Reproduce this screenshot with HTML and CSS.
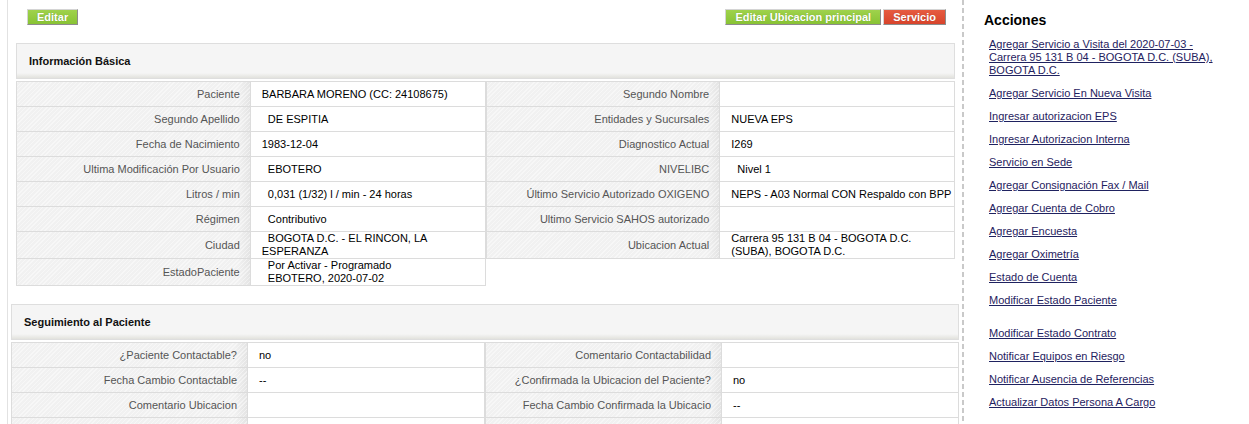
FILE: index.html
```html
<html lang="es">

<head>
	<title>Paciente - Información Básica</title>
	<meta http-equiv="Content-Type" content="text/html; charset=UTF-8">
	<meta name="viewport" content="width=device-width,initial-scale=1">
	<link rel="stylesheet" href="styles.css">
</head>

<body>
	<div class="page">
		<div class="main">
			<div class="toolbar">
				<a class="btn btn-green" href="#">Editar</a>
				<div class="toolbar-right">
					<a class="btn btn-green" href="#">Editar Ubicacion principal</a>
					<a class="btn btn-red" href="#">Servicio</a>
				</div>
			</div>

			<div class="panel panel-basic">
				<div class="panel-head">Información Básica</div>
				<div class="panel-body">
					<table class="info">
						<tr><td class="label">Paciente</td><td>BARBARA MORENO (CC: 24108675)</td></tr>
						<tr><td class="label">Segundo Apellido</td><td>&nbsp; DE ESPITIA</td></tr>
						<tr><td class="label">Fecha de Nacimiento</td><td>1983-12-04</td></tr>
						<tr><td class="label">Ultima Modificación Por Usuario</td><td>&nbsp; EBOTERO</td></tr>
						<tr><td class="label">Litros / min</td><td>&nbsp; 0,031 (1/32) l / min - 24 horas</td></tr>
						<tr><td class="label">Régimen</td><td>&nbsp; Contributivo</td></tr>
						<tr><td class="label">Ciudad</td><td>&nbsp; BOGOTA D.C. - EL RINCON, LA ESPERANZA</td></tr>
						<tr><td class="label">EstadoPaciente</td><td>&nbsp; Por Activar - Programado<br>&nbsp; EBOTERO, 2020-07-02</td></tr>
					</table>
					<table class="info">
						<tr><td class="label">Segundo Nombre</td><td></td></tr>
						<tr><td class="label">Entidades y Sucursales</td><td>NUEVA EPS</td></tr>
						<tr><td class="label">Diagnostico Actual</td><td>I269</td></tr>
						<tr><td class="label">NIVELIBC</td><td>&nbsp; Nivel 1</td></tr>
						<tr><td class="label">Último Servicio Autorizado OXIGENO</td><td>NEPS - A03 Normal CON Respaldo con BPP</td></tr>
						<tr><td class="label">Ultimo Servicio SAHOS autorizado</td><td></td></tr>
						<tr><td class="label">Ubicacion Actual</td><td>Carrera 95 131 B 04 - BOGOTA D.C. (SUBA), BOGOTA D.C.</td></tr>
					</table>
				</div>
			</div>

			<div class="panel panel-follow">
				<div class="panel-head">Seguimiento al Paciente</div>
				<div class="panel-body">
					<table class="info">
						<tr><td class="label">¿Paciente Contactable?</td><td>no</td></tr>
						<tr><td class="label">Fecha Cambio Contactable</td><td>--</td></tr>
						<tr><td class="label">Comentario Ubicacion</td><td></td></tr>
						<tr><td class="label"></td><td></td></tr>
					</table>
					<table class="info">
						<tr><td class="label">Comentario Contactabilidad</td><td></td></tr>
						<tr><td class="label">¿Confirmada la Ubicacion del Paciente?</td><td>no</td></tr>
						<tr><td class="label">Fecha Cambio Confirmada la Ubicacio</td><td>--</td></tr>
						<tr><td class="label"></td><td></td></tr>
					</table>
				</div>
			</div>
		</div>

		<div class="sidebar">
			<h2 class="sidebar-title">Acciones</h2>
			<div class="actions">
				<a href="#">Agregar Servicio a Visita del 2020-07-03 - Carrera 95 131 B 04 - BOGOTA D.C. (SUBA), BOGOTA D.C.</a>
				<a href="#">Agregar Servicio En Nueva Visita</a>
				<a href="#">Ingresar autorizacion EPS</a>
				<a href="#">Ingresar Autorizacion Interna</a>
				<a href="#">Servicio en Sede</a>
				<a href="#">Agregar Consignación Fax / Mail</a>
				<a href="#">Agregar Cuenta de Cobro</a>
				<a href="#">Agregar Encuesta</a>
				<a href="#">Agregar Oximetría</a>
				<a href="#">Estado de Cuenta</a>
				<a href="#">Modificar Estado Paciente</a>
				<a class="group-start" href="#">Modificar Estado Contrato</a>
				<a href="#">Notificar Equipos en Riesgo</a>
				<a href="#">Notificar Ausencia de Referencias</a>
				<a href="#">Actualizar Datos Persona A Cargo</a>
			</div>
		</div>
	</div>
</body>

</html>
```

FILE: styles.css
```css
body {
	margin: 0;
	font-family: "Liberation Sans", Arial, sans-serif;
	font-size: 11px;
	color: #000;
	background: #fff;
	overflow: hidden;
}

.page {
	display: flex;
	align-items: stretch;
	min-height: 424px;
}

.main {
	margin-left: 7px;
	width: 955px;
	flex-shrink: 0;
	box-sizing: border-box;
	border-left: 1px solid #e2e2e2;
}

.toolbar {
	display: flex;
	justify-content: space-between;
	padding: 9px 16px 0 19px;
}

.toolbar-right {
	display: flex;
	gap: 2px;
}

.btn {
	display: block;
	height: 14px;
	line-height: 14px;
	padding: 0 9px;
	font-size: 11px;
	font-weight: bold;
	color: #fff;
	text-decoration: none;
	border: 1px solid;
	border-color: #d4d4d4 #8c8c8c #8c8c8c #d4d4d4;
	text-shadow: 0 0 1px rgba(0, 0, 0, 0.25);
}

.btn-green {
	background: linear-gradient(#9fd24c, #88c334);
}

.btn-red {
	background: linear-gradient(#e65b40, #d8442b);
}

.panel {
	margin-top: 18px;
}

.panel-basic {
	margin-left: 8px;
	margin-right: 7px;
}

.panel-follow {
	margin-left: 3px;
	margin-right: 3px;
}

.panel-head {
	height: 34px;
	line-height: 34px;
	padding: 0 12px;
	font-size: 11px;
	font-weight: bold;
	color: #111;
	border: 1px solid #dedede;
	background: linear-gradient(to bottom, #f5f5f5 0, #f5f5f5 calc(100% - 5px), #e2e2dd 100%);
}

.panel-body {
	display: grid;
	grid-template-columns: 1fr 1fr;
	align-items: start;
	margin-top: 2px;
}

.info {
	width: 100%;
	table-layout: fixed;
	border-collapse: separate;
	border-spacing: 0;
	border: 1px solid #dcdcdc;
	border-bottom: 0;
	font-family: "Liberation Sans", Arial, sans-serif;
	font-size: 11px;
	color: #000;
}

.info td {
	height: 25px;
	padding: 0 2px 0 11px;
	line-height: 13px;
	vertical-align: middle;
	border-bottom: 1px solid #dcdcdc;
	overflow: hidden;
}

.info td.label {
	box-sizing: border-box;
	width: 50%;
	padding: 0 10px 0 6px;
	text-align: right;
	color: #555;
	white-space: nowrap;
	border-right: 1px solid #dcdcdc;
	background:
		repeating-linear-gradient(135deg, rgba(255, 255, 255, 0.45) 0 1px, rgba(255, 255, 255, 0) 1px 3px),
		linear-gradient(to right, #f1f1f1 0, #f1f1f1 calc(100% - 12px), #e4e4e4 100%);
}

.sidebar {
	flex: 1;
	padding: 12px 0 0 22px;
	background: linear-gradient(#c9c9c9 0, #c9c9c9 5px, rgba(0, 0, 0, 0) 5px) left top / 2px 8px repeat-y;
}

.sidebar-title {
	margin: 0 0 10px;
	font-size: 14px;
	line-height: 16px;
	font-weight: bold;
	color: #000;
}

.actions {
	width: 240px;
	margin-left: 5px;
}

.actions a {
	display: block;
	line-height: 13px;
	margin-bottom: 10px;
	color: #1f2260;
	text-decoration: underline;
}

.actions a.group-start {
	margin-top: 20px;
}
```
